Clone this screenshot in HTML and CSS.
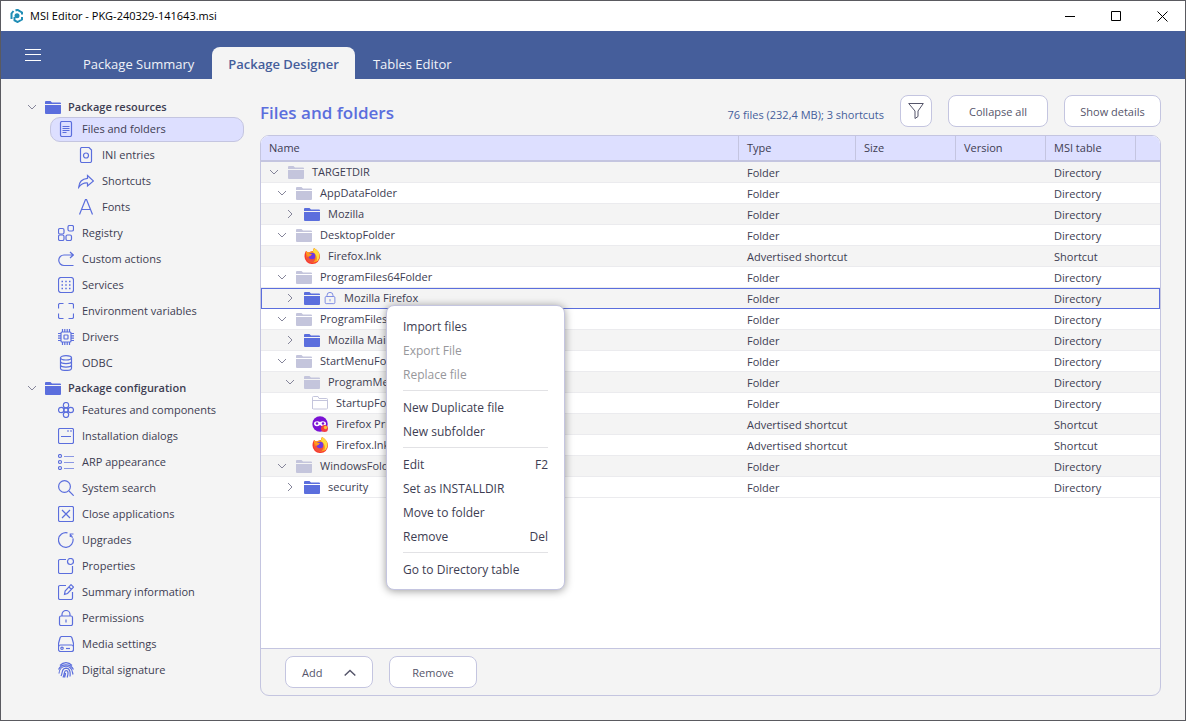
FILE: index.html
```html
<!DOCTYPE html>
<html lang="en">
<head>
<meta charset="utf-8">
<title>MSI Editor - PKG-240329-141643.msi</title>
<link rel="stylesheet" href="styles.css">
</head>
<body>
<svg class="sprite" aria-hidden="true">
  <symbol id="down" viewBox="0 0 10 10"><path d="M1 3l4 4 4-4"/></symbol>
  <symbol id="right" viewBox="0 0 10 10"><path d="M3 1l4 4-4 4"/></symbol>
  <symbol id="folder" viewBox="0 0 16 16"><path fill="currentColor" stroke="none" d="M0 3a1 1 0 0 1 1-1h4.500l1.500 1.500h8a1 1 0 0 1 1 1V5H0zM0 6h16v8a1 1 0 0 1-1 1H1a1 1 0 0 1-1-1z"/></symbol>
  <symbol id="folder-open" viewBox="0 0 16 16"><path d="M.5 14V2.500a1 1 0 0 1 1-1H6l1 2h7.500a1 1 0 0 1 1 1v8.500a1 1 0 0 1-1 1h-13a1 1 0 0 1-1-1zM.5 5.500h15"/></symbol>
  <symbol id="doc" viewBox="0 0 16 16"><rect x="2.500" y=".5" width="11" height="15" rx="1.500"/><path d="M4.500 5.500h7M4.500 7.500h7M4.500 9.500h7M4.500 11.500h4"/></symbol>
  <symbol id="ini" viewBox="0 0 16 16"><path d="M4 .5h7l2.500 2.500v11a1.500 1.500 0 0 1-1.500 1.500H4A1.500 1.500 0 0 1 2.500 14V2A1.500 1.500 0 0 1 4 .5z"/><circle cx="8" cy="8.500" r="2.500"/></symbol>
  <symbol id="share" viewBox="0 0 16 16"><path d="M9.500 2.500l6 5.500-6 5v-3C6 9.700 3.500 10.500.7 14.300 1 9 4 5.800 9.500 5.300z"/></symbol>
  <symbol id="font" viewBox="0 0 16 16"><path d="M1.500 15.500L7.500.5h1l6 15M4 10.500h8"/></symbol>
  <symbol id="registry" viewBox="0 0 16 16"><rect x=".5" y="3.500" width="5.500" height="5.500" rx="1.500"/><rect x="10" y=".5" width="5.500" height="5.500" rx="1.500"/><rect x=".5" y="10" width="5.500" height="5.500" rx="1.500"/><rect x="8" y="10" width="5.500" height="5.500" rx="1.500"/></symbol>
  <symbol id="action" viewBox="0 0 16 16"><path d="M15.500 14.500H6a5 5 0 0 1 0-10.500h9M12 1l3.300 3L12 7"/></symbol>
  <symbol id="services" viewBox="0 0 16 16"><rect x=".5" y=".5" width="15" height="15" rx="2.500"/><path stroke-width="1.500" stroke-dasharray="1.500 2.250" d="M3.500 4.500h9.500M3.500 8h9.500M3.500 11.500h9.500"/></symbol>
  <symbol id="env" viewBox="0 0 16 16"><path d="M5.500.5H2A1.500 1.500 0 0 0 .5 2v3.500M10.500.5H14A1.500 1.500 0 0 1 15.500 2v3.500M5.500 15.500H2A1.500 1.500 0 0 1 .5 14v-3.500M10.500 15.500H14a1.500 1.500 0 0 0 1.500-1.500v-3.500"/></symbol>
  <symbol id="chip" viewBox="0 0 16 16"><rect x="3" y="3" width="10" height="10" rx="1"/><rect x="6" y="6" width="4" height="4" rx=".5"/><path d="M4.500 0v3M6.800 0v3M9.200 0v3M11.500 0v3M4.500 13v3M6.800 13v3M9.200 13v3M11.500 13v3M0 4.500h3M0 6.800h3M0 9.200h3M0 11.500h3M13 4.500h3M13 6.800h3M13 9.200h3M13 11.500h3"/></symbol>
  <symbol id="db" viewBox="0 0 16 16"><ellipse cx="8" cy="2.800" rx="5.500" ry="2.200"/><path d="M2.500 2.800v10.400c0 3 11 3 11 0V2.800M2.500 6.300c0 3 11 3 11 0M2.500 9.800c0 3 11 3 11 0"/></symbol>
  <symbol id="features" viewBox="0 0 16 16"><circle cx="8" cy="3.200" r="2.700"/><circle cx="8" cy="12.800" r="2.700"/><circle cx="3.200" cy="8" r="2.700"/><circle cx="12.800" cy="8" r="2.700"/><circle cx="8" cy="8" r="2.200"/></symbol>
  <symbol id="dialog" viewBox="0 0 16 16"><rect x=".5" y=".5" width="15" height="15" rx="1.500"/><path d="M3 8.500h10M9 3h2M12 3h2"/></symbol>
  <symbol id="list" viewBox="0 0 16 16"><circle cx="2" cy="2" r="1.500"/><circle cx="2" cy="8" r="1.500"/><circle cx="2" cy="14" r="1.500"/><path opacity=".7" d="M6 2.500h10M6 8.500h10M6 14.500h10"/></symbol>
  <symbol id="search" viewBox="0 0 16 16"><circle cx="6.500" cy="6.500" r="5.900"/><path d="M11 11l4.700 4.700"/></symbol>
  <symbol id="close" viewBox="0 0 16 16"><rect x=".5" y=".5" width="15" height="15" rx="1.500"/><path d="M4 4l8 8M12 4l-8 8"/></symbol>
  <symbol id="upgrade" viewBox="0 0 16 16"><path d="M9.500.900a7.300 7.300 0 1 0 5.400 5.500M12.300 2.800c1 .7 1.700 1.600 2.200 3M15.500 2H12.300v3"/></symbol>
  <symbol id="prop" viewBox="0 0 16 16"><path d="M8 1.500H2A1.500 1.500 0 0 0 .5 3v11A1.500 1.500 0 0 0 2 15.500h11a1.500 1.500 0 0 0 1.500-1.500V8"/><circle cx="12.500" cy="3.500" r="3"/></symbol>
  <symbol id="edit" viewBox="0 0 16 16"><path d="M8 1.500H2A1.500 1.500 0 0 0 .5 3v11A1.500 1.500 0 0 0 2 15.500h11a1.500 1.500 0 0 0 1.500-1.500V8M13 .7l2.500 2.500-6 6.300-3 .8.600-3.200zM11 3l2.300 2.300"/></symbol>
  <symbol id="lock" viewBox="0 0 16 16"><rect x="1.500" y="6" width="13" height="9.500" rx="1.500"/><path d="M4 6V4.500a4 4 0 0 1 8 0V6M8 9.500v3"/></symbol>
  <symbol id="media" viewBox="0 0 16 16"><path d="M.5 10.500v-3L2 2A2 2 0 0 1 4 .5h8A2 2 0 0 1 14 2l1.500 5.500v3"/><rect x=".5" y="9" width="15" height="6.500" rx="2"/><circle cx="4" cy="12.300" r="1.200"/><path d="M8 12.500h4"/></symbol>
  <symbol id="finger" viewBox="0 0 16 16"><path d="M2 3.500C5.500-.3 10.500-.3 14 3.500M.5 7.500C3.500 1.200 12.500 1.200 15.500 7.500M1 11.500C1.500 2 14 2 14.500 10.500l.5 2M3 14c2-3 0-7.500 5-7.800 4 0 4.500 4 4 8.300M5 15.500C7 12 5.500 9 8 8.500c3 0 2 4 1.200 7M7.500 11c0 2-.5 3-1 4.500"/></symbol>
  <symbol id="fox" viewBox="0 0 16 16"><path stroke="none" fill="#f7392f" d="M2 3l2 1.500L9 3l1-3c3 2 6 4.500 6 8.500A7.500 7.500 0 0 1 8.300 16 7.500 7.500 0 0 1 .5 8.500C.5 6 1 4.500 2 3z"/><path stroke="none" fill="#ff9a1c" d="M2 3l2 1.500L9 3l1-3c3 2 6 5 5 10-1 3-3 4.500-6 4.500C5 14.500 2 12 2.500 8c0-1-.8-2.500-.5-5z"/><path stroke="none" fill="#ffdc3e" d="M10 0c3 2 6 4.500 5.500 8.500-.5 2.500-1.500 4-3 5C14 9.500 12 6 9 4z"/><circle stroke="none" fill="#f1503b" cx="7" cy="10" r="4.500"/><circle stroke="none" fill="#7137df" cx="8" cy="8" r="3.300"/><path stroke="none" fill="#ff9a1c" d="M3 5.500l5 .5-1.500 2-3 1z"/></symbol>
  <symbol id="private" viewBox="0 0 16 16"><circle stroke="none" fill="#7a12d4" cx="8" cy="8" r="7.700"/><path stroke="none" fill="#fff" d="M2 7.500C2 5 6 4.500 8 6c2-1.500 6-1 6 1.500 0 3-3.500 3.500-6 1.500-2.500 2-6 1.500-6-1.500z"/><circle stroke="none" fill="#7a12d4" cx="5" cy="7.500" r="1.300"/><circle stroke="none" fill="#7a12d4" cx="11" cy="7.500" r="1.300"/><circle stroke="none" fill="#f23f43" cx="12.500" cy="12.500" r="3.500"/><circle stroke="none" fill="#ffbd2f" cx="13.500" cy="11.500" r="1.700"/></symbol>
</svg>

<div class="window">
  <header class="titlebar">
    <svg class="logo" viewBox="0 0 14 14"><path d="M1.500 10V4.500L3.500 2M5.500 1.500l2-.7 4.500 2.700v2M12 8v2.500L7.500 13l-3-1.500V8"/><circle cx="7" cy="6.800" r="2.500"/></svg>
    <span class="caption">MSI Editor - PKG-240329-141643.msi</span>
    <button class="winbtn" aria-label="Minimize"><svg viewBox="0 0 11 11"><path d="M0 5.500h10"/></svg></button>
    <button class="winbtn" aria-label="Maximize"><svg viewBox="0 0 11 11"><path d="M.5.500h9v9h-9z"/></svg></button>
    <button class="winbtn" aria-label="Close"><svg viewBox="0 0 11 11"><path d="M.5.500l10 10M10.500.500l-10 10"/></svg></button>
  </header>

  <nav class="ribbon">
    <button class="burger" aria-label="Menu"><svg viewBox="0 0 16 12"><path d="M0 .5h16M0 5.500h16M0 11.500h16"/></svg></button>
    <div class="tabs">
      <button class="tab">Package Summary</button>
      <button class="tab current">Package Designer</button>
      <button class="tab">Tables Editor</button>
    </div>
  </nav>

  <div class="body">
    <aside class="sidebar">
      <div class="section"><svg class="chev"><use href="#down"/></svg><svg class="ico"><use href="#folder"/></svg>Package resources</div>
      <a class="item selected" href="#"><svg class="ico"><use href="#doc"/></svg>Files and folders</a>
      <a class="item sub" href="#"><svg class="ico"><use href="#ini"/></svg>INI entries</a>
      <a class="item sub" href="#"><svg class="ico"><use href="#share"/></svg>Shortcuts</a>
      <a class="item sub" href="#"><svg class="ico"><use href="#font"/></svg>Fonts</a>
      <a class="item" href="#"><svg class="ico"><use href="#registry"/></svg>Registry</a>
      <a class="item" href="#"><svg class="ico"><use href="#action"/></svg>Custom actions</a>
      <a class="item" href="#"><svg class="ico"><use href="#services"/></svg>Services</a>
      <a class="item" href="#"><svg class="ico"><use href="#env"/></svg>Environment variables</a>
      <a class="item" href="#"><svg class="ico"><use href="#chip"/></svg>Drivers</a>
      <a class="item" href="#"><svg class="ico"><use href="#db"/></svg>ODBC</a>
      <div class="section"><svg class="chev"><use href="#down"/></svg><svg class="ico"><use href="#folder"/></svg>Package configuration</div>
      <a class="item" href="#"><svg class="ico"><use href="#features"/></svg>Features and components</a>
      <a class="item" href="#"><svg class="ico"><use href="#dialog"/></svg>Installation dialogs</a>
      <a class="item" href="#"><svg class="ico"><use href="#list"/></svg>ARP appearance</a>
      <a class="item" href="#"><svg class="ico"><use href="#search"/></svg>System search</a>
      <a class="item" href="#"><svg class="ico"><use href="#close"/></svg>Close applications</a>
      <a class="item" href="#"><svg class="ico"><use href="#upgrade"/></svg>Upgrades</a>
      <a class="item" href="#"><svg class="ico"><use href="#prop"/></svg>Properties</a>
      <a class="item" href="#"><svg class="ico"><use href="#edit"/></svg>Summary information</a>
      <a class="item" href="#"><svg class="ico"><use href="#lock"/></svg>Permissions</a>
      <a class="item" href="#"><svg class="ico"><use href="#media"/></svg>Media settings</a>
      <a class="item" href="#"><svg class="ico"><use href="#finger"/></svg>Digital signature</a>
    </aside>

    <main class="main">
      <div class="toolbar">
        <h1>Files and folders</h1>
        <span class="stats">76 files (232,4 MB); 3 shortcuts</span>
        <button class="btn filter" aria-label="Filter"><svg viewBox="0 0 16 16"><path d="M.7.500h14.600L10 8v5.500L7 15.500V8z"/></svg></button>
        <button class="btn collapse">Collapse all</button>
        <button class="btn details">Show details</button>
      </div>

      <section class="panel">
        <div class="grid">
          <table>
            <colgroup><col><col class="c-type"><col class="c-size"><col class="c-version"><col class="c-table"><col class="c-end"></colgroup>
            <thead><tr><th>Name</th><th>Type</th><th>Size</th><th>Version</th><th>MSI table</th><th></th></tr></thead>
            <tbody>
              <tr><td><div class="node l0"><svg class="chev"><use href="#down"/></svg><svg class="ico muted"><use href="#folder"/></svg>TARGETDIR</div></td><td>Folder</td><td></td><td></td><td>Directory</td><td></td></tr>
              <tr><td><div class="node l1"><svg class="chev"><use href="#down"/></svg><svg class="ico muted"><use href="#folder"/></svg>AppDataFolder</div></td><td>Folder</td><td></td><td></td><td>Directory</td><td></td></tr>
              <tr><td><div class="node l2"><svg class="chev"><use href="#right"/></svg><svg class="ico"><use href="#folder"/></svg>Mozilla</div></td><td>Folder</td><td></td><td></td><td>Directory</td><td></td></tr>
              <tr><td><div class="node l1"><svg class="chev"><use href="#down"/></svg><svg class="ico muted"><use href="#folder"/></svg>DesktopFolder</div></td><td>Folder</td><td></td><td></td><td>Directory</td><td></td></tr>
              <tr><td><div class="node l2"><span class="chev"></span><svg class="ico"><use href="#fox"/></svg>Firefox.lnk</div></td><td>Advertised shortcut</td><td></td><td></td><td>Shortcut</td><td></td></tr>
              <tr><td><div class="node l1"><svg class="chev"><use href="#down"/></svg><svg class="ico muted"><use href="#folder"/></svg>ProgramFiles64Folder</div></td><td>Folder</td><td></td><td></td><td>Directory</td><td></td></tr>
              <tr class="active"><td><div class="node l2"><svg class="chev"><use href="#right"/></svg><svg class="ico paired"><use href="#folder"/></svg><svg class="ico small"><use href="#lock"/></svg>Mozilla Firefox</div></td><td>Folder</td><td></td><td></td><td>Directory</td><td></td></tr>
              <tr><td><div class="node l1"><svg class="chev"><use href="#down"/></svg><svg class="ico muted"><use href="#folder"/></svg>ProgramFilesFolder</div></td><td>Folder</td><td></td><td></td><td>Directory</td><td></td></tr>
              <tr><td><div class="node l2"><svg class="chev"><use href="#right"/></svg><svg class="ico"><use href="#folder"/></svg>Mozilla Maintenance</div></td><td>Folder</td><td></td><td></td><td>Directory</td><td></td></tr>
              <tr><td><div class="node l1"><svg class="chev"><use href="#down"/></svg><svg class="ico muted"><use href="#folder"/></svg>StartMenuFolder</div></td><td>Folder</td><td></td><td></td><td>Directory</td><td></td></tr>
              <tr><td><div class="node l2"><svg class="chev"><use href="#down"/></svg><svg class="ico muted"><use href="#folder"/></svg>ProgramMenuFolder</div></td><td>Folder</td><td></td><td></td><td>Directory</td><td></td></tr>
              <tr><td><div class="node l3"><span class="chev"></span><svg class="ico muted"><use href="#folder-open"/></svg>StartupFolder</div></td><td>Folder</td><td></td><td></td><td>Directory</td><td></td></tr>
              <tr><td><div class="node l3"><span class="chev"></span><svg class="ico"><use href="#private"/></svg>Firefox Private</div></td><td>Advertised shortcut</td><td></td><td></td><td>Shortcut</td><td></td></tr>
              <tr><td><div class="node l3"><span class="chev"></span><svg class="ico"><use href="#fox"/></svg>Firefox.lnk</div></td><td>Advertised shortcut</td><td></td><td></td><td>Shortcut</td><td></td></tr>
              <tr><td><div class="node l1"><svg class="chev"><use href="#down"/></svg><svg class="ico muted"><use href="#folder"/></svg>WindowsFolder</div></td><td>Folder</td><td></td><td></td><td>Directory</td><td></td></tr>
              <tr><td><div class="node l2"><svg class="chev"><use href="#right"/></svg><svg class="ico"><use href="#folder"/></svg>security</div></td><td>Folder</td><td></td><td></td><td>Directory</td><td></td></tr>
            </tbody>
          </table>
        </div>
        <footer class="actions">
          <button class="btn add">Add<svg viewBox="0 0 12 8"><path d="M.7 6.500L6 1.500l5.300 5"/></svg></button>
          <button class="btn remove">Remove</button>
        </footer>
      </section>

      <div class="menu" role="menu">
        <button role="menuitem">Import files</button>
        <button role="menuitem" disabled>Export File</button>
        <button role="menuitem" disabled>Replace file</button>
        <hr>
        <button role="menuitem">New Duplicate file</button>
        <button role="menuitem">New subfolder</button>
        <hr>
        <button role="menuitem">Edit<span>F2</span></button>
        <button role="menuitem">Set as INSTALLDIR</button>
        <button role="menuitem">Move to folder</button>
        <button role="menuitem">Remove<span>Del</span></button>
        <hr>
        <button role="menuitem">Go to Directory table</button>
      </div>
    </main>
  </div>
</div>
</body>
</html>
```
FILE: styles.css
```css
:root {
  --accent: #5b6edd;
  --line: #c4c5e0;
  --muted: #c4c5dc;
  --text: #3d3d52;
  --page: #f4f4f4;
  --lilac: #dddfff;
}
* { box-sizing: border-box; }
body {
  margin: 0;
  color: var(--text);
  font: 11px/16px "Open Sans", "Noto Sans", sans-serif;
}
button { font: inherit; color: inherit; border: 0; padding: 0; background: none; }
svg { flex: none; fill: none; stroke: currentColor; stroke-width: 1; }
.sprite { position: absolute; width: 0; height: 0; }

.window {
  display: flex;
  flex-direction: column;
  min-height: 100vh;
  border: 1px solid #5a5a60;
  background: var(--page);
}
.titlebar { display: flex; align-items: center; height: 30px; padding-left: 9px; background: #fff; color: #000; }
.logo { width: 14px; height: 14px; stroke: #1f8db5; stroke-width: 2; }
.logo circle { fill: #1f8db5; stroke: none; }
.caption { flex: 1; padding-left: 6px; }
.winbtn { display: grid; place-items: center; width: 46px; height: 30px; }
.winbtn svg { width: 11px; height: 11px; }

.ribbon { display: flex; height: 48px; background: #455e9b; color: #fff; }
.burger { width: 16px; height: 12px; margin: 18px 26px 0 24px; }
.burger svg { display: block; width: 16px; height: 12px; }
.tabs { display: flex; gap: 2px; align-items: flex-end; }
.tab { height: 32px; padding: 2px 16px 0; font-size: 13px; color: #f0f2f8; border-radius: 8px 8px 0 0; }
.tab.current { background: var(--page); color: #455e9b; font-weight: 600; }

.body { display: flex; flex: 1; }
.sidebar { width: 259px; padding: 19px 16px 16px 26px; }
.section { display: flex; align-items: center; height: 18px; font-weight: 600; }
.item + .section { margin-top: 3px; }
.section .chev { margin-right: 8px; }
.section .ico { margin-right: 7px; }
.chev { flex: none; width: 10px; height: 10px; color: #85859a; }
.ico { width: 16px; height: 16px; color: var(--accent); }
.item {
  display: flex;
  align-items: center;
  gap: 8px;
  height: 25px;
  margin: 1px 0 0 23px;
  padding: 0 0 1px 7px;
  border: 1px solid transparent;
  border-radius: 10px;
  color: inherit;
  text-decoration: none;
}
.item .ico { stroke-width: 1.2; }
.item.sub { padding-left: 27px; }
.item.selected { border-color: var(--line); background: var(--lilac); }

.main { position: relative; display: flex; flex: 1; flex-direction: column; gap: 8px; padding: 16px 24px 24px 0; }
.toolbar { display: flex; align-items: center; gap: 16px; }
h1 { flex: 1; margin: 0; padding-top: 3px; color: var(--accent); font-size: 17px; line-height: 24px; font-weight: 600; }
.stats { padding-top: 7px; color: #455e9b; }
.btn {
  height: 32px;
  padding-top: 2px;
  border: 1px solid var(--line);
  border-radius: 8px;
  background: #fff;
  color: #55556a;
  font-weight: 500;
}
.filter { display: grid; place-items: center; width: 32px; padding: 0; }
.filter svg { width: 16px; height: 16px; }
.collapse { width: 100px; }
.details { width: 97px; }

.panel {
  display: flex;
  flex: 1;
  flex-direction: column;
  overflow: hidden;
  border: 1px solid var(--line);
  border-radius: 9px;
}
.grid { flex: 1; background: #fff; }
table { width: 100%; border-collapse: separate; border-spacing: 0; table-layout: fixed; }
.c-type { width: 117px; }
.c-size { width: 100px; }
.c-version { width: 90px; }
.c-table { width: 90px; }
.c-end { width: 24px; }
th {
  height: 26px;
  padding: 0 8px;
  border-bottom: 2px solid var(--line);
  border-right: 1px solid var(--line);
  background: var(--lilac);
  font-weight: 500;
  text-align: left;
}
th:last-child { border-right: 0; }
td { height: 21px; padding: 1px 8px 0; border-bottom: 1px solid #ebebee; line-height: 16px; white-space: nowrap; }
td:first-child { padding-top: 0; }
tbody tr:nth-child(odd) { background: var(--page); }
tr.active { outline: 1px solid var(--accent); outline-offset: -1px; }
.node { display: flex; align-items: center; height: 20px; }
.node .chev { margin-right: 9px; }
.node .ico { margin-right: 8px; }
.node .ico.paired { margin-right: 4px; }
.node .small { width: 12px; height: 14px; }
.node .muted { color: var(--muted); }
.l1 { padding-left: 8px; }
.l2 { padding-left: 16px; }
.l3 { padding-left: 24px; }

.actions { display: flex; gap: 16px; padding: 7px 24px; border-top: 1px solid var(--line); }
.actions .btn { width: 88px; }
.actions .add { display: flex; align-items: center; justify-content: space-between; padding: 2px 16px 0; }
.add svg { width: 12px; height: 8px; stroke-width: 1.5; }

.menu {
  position: absolute;
  top: 226px;
  left: 126px;
  width: 179px;
  padding: 8px 16px;
  border: 1px solid var(--line);
  border-radius: 8px;
  background: #fff;
  box-shadow: 0 1px 9px rgba(0, 0, 0, .4);
  font-size: 12px;
}
.menu button { display: flex; justify-content: space-between; align-items: center; width: 100%; height: 24px; padding-top: 1px; }
.menu button:disabled { color: #97979b; }
.menu hr { height: 1px; margin: 4px 0; border: 0; background: #e2e2e5; }
```
